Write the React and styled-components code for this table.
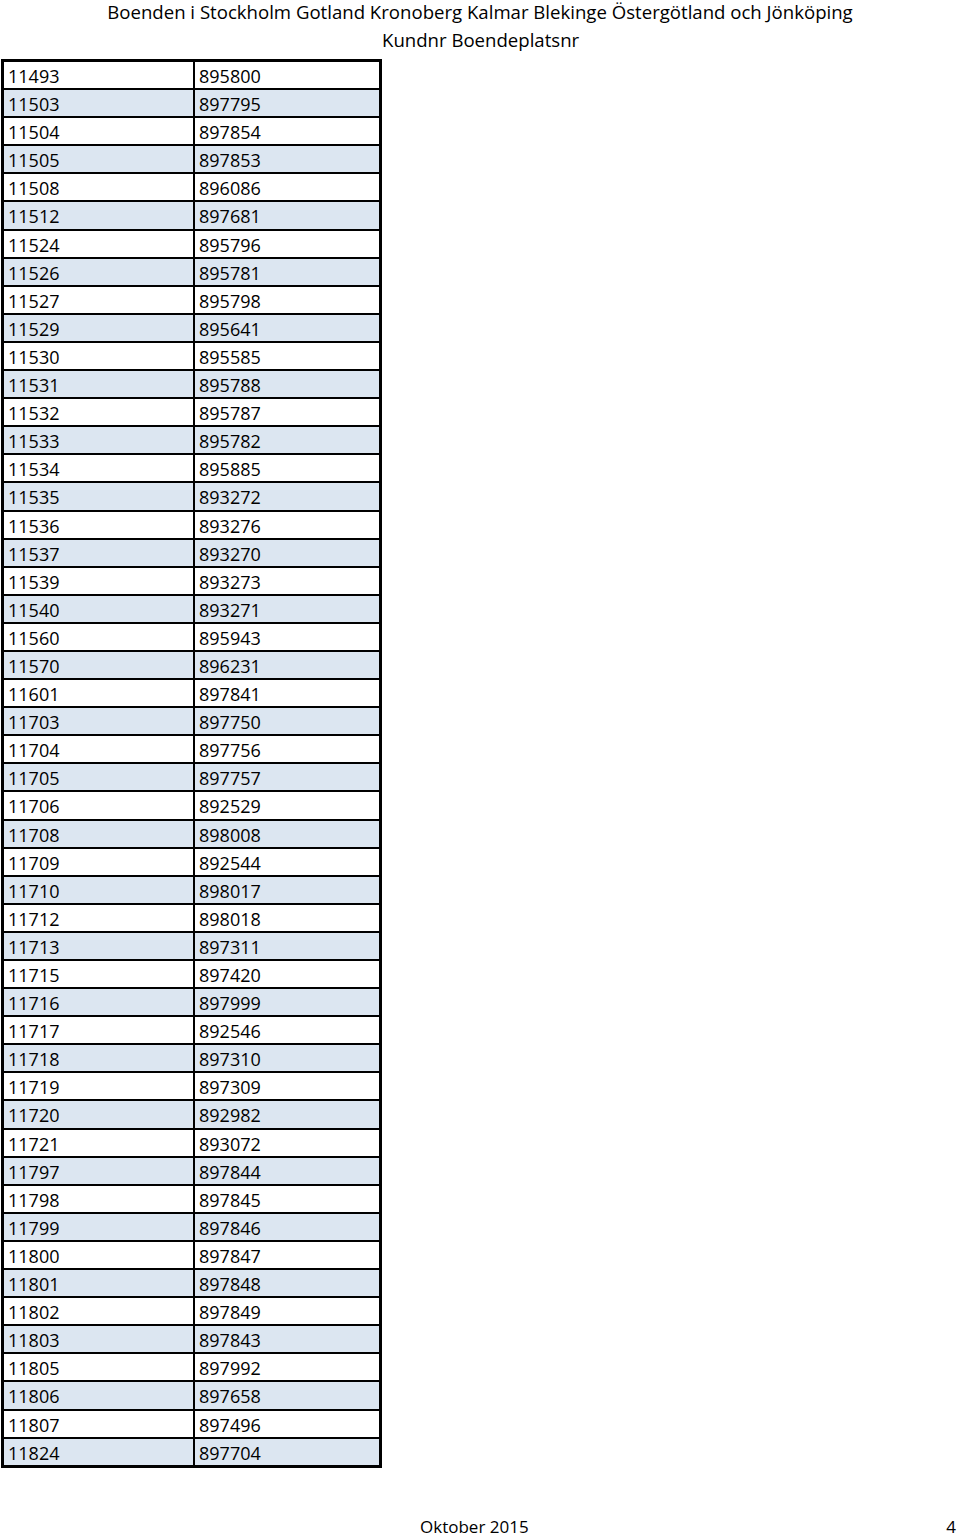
import React from "react";
import styled, { createGlobalStyle } from "styled-components";

const GlobalStyle = createGlobalStyle`
  html, body { margin: 0; padding: 0; background: #fff; }
  body { font-family: "Open Sans", "Liberation Sans", sans-serif; color: #000; }
`;

const rows = [
  ["11493", "895800"], ["11503", "897795"], ["11504", "897854"], ["11505", "897853"],
  ["11508", "896086"], ["11512", "897681"], ["11524", "895796"], ["11526", "895781"],
  ["11527", "895798"], ["11529", "895641"], ["11530", "895585"], ["11531", "895788"],
  ["11532", "895787"], ["11533", "895782"], ["11534", "895885"], ["11535", "893272"],
  ["11536", "893276"], ["11537", "893270"], ["11539", "893273"], ["11540", "893271"],
  ["11560", "895943"], ["11570", "896231"], ["11601", "897841"], ["11703", "897750"],
  ["11704", "897756"], ["11705", "897757"], ["11706", "892529"], ["11708", "898008"],
  ["11709", "892544"], ["11710", "898017"], ["11712", "898018"], ["11713", "897311"],
  ["11715", "897420"], ["11716", "897999"], ["11717", "892546"], ["11718", "897310"],
  ["11719", "897309"], ["11720", "892982"], ["11721", "893072"], ["11797", "897844"],
  ["11798", "897845"], ["11799", "897846"], ["11800", "897847"], ["11801", "897848"],
  ["11802", "897849"], ["11803", "897843"], ["11805", "897992"], ["11806", "897658"],
  ["11807", "897496"], ["11824", "897704"],
];

const Page = styled.div`
  width: 960px;
  height: 1536px;
  display: flex;
  flex-direction: column;
  overflow: hidden;
`;

const Header = styled.header`
  margin-top: -2px;
  font-size: 18.6px;
  line-height: 28px;
`;

const Title = styled.div`
  text-align: center;
  white-space: nowrap;
`;

const Subtitle = styled.div`
  padding-left: 382px;
  white-space: nowrap;
`;

const Table = styled.div`
  margin-top: 5px;
  margin-left: 1px;
  width: 375px;
  border: 3px solid #000;
  display: flex;
  flex-direction: column;
`;

const Row = styled.div`
  display: grid;
  grid-template-columns: 189px 1fr;
  height: 26.1px;
  background: ${(p) => (p.$shaded ? "#dce6f1" : "#ffffff")};
  & + & {
    border-top: 2px solid #000;
  }
`;

const Cell = styled.div`
  font-size: 18px;
  line-height: 26px;
  padding-left: 4px;
  padding-top: 1px;
  border-left: ${(p) => (p.$first ? "none" : "2px solid #000")};
  white-space: nowrap;
`;

const Footer = styled.footer`
  margin-top: auto;
  display: flex;
  justify-content: space-between;
  align-items: flex-end;
  padding-left: 420px;
  padding-right: 4px;
  font-size: 17px;
  line-height: 19px;
`;

export default function App() {
  return (
    <>
      <GlobalStyle />
      <Page>
        <Header>
          <Title>Boenden i Stockholm Gotland Kronoberg Kalmar Blekinge Östergötland och Jönköping</Title>
          <Subtitle>Kundnr Boendeplatsnr</Subtitle>
        </Header>
        <Table>
          {rows.map(([a, b], i) => (
            <Row key={a} $shaded={i % 2 === 1}>
              <Cell $first>{a}</Cell>
              <Cell>{b}</Cell>
            </Row>
          ))}
        </Table>
        <Footer>
          <span>Oktober 2015</span>
          <span>4</span>
        </Footer>
      </Page>
    </>
  );
}
